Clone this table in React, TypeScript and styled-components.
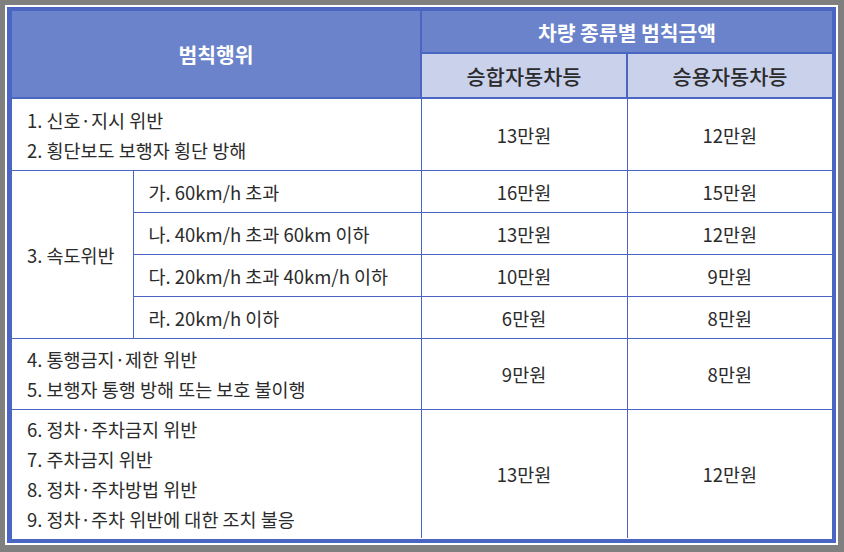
import styled, { createGlobalStyle } from "styled-components";

const GlobalStyle = createGlobalStyle`
  html, body {
    margin: 0;
    padding: 0;
    background: #7f7f7f;
  }
  body {
    font-family: "Noto Sans CJK KR", "Noto Sans", sans-serif;
    color: #2b2b2b;
  }
`;

const LINE = "#4a66c2";

const Frame = styled.div`
  box-sizing: border-box;
  width: 833px;
  height: 540px;
  margin: 5px 0 0 5px;
  padding: 2px;
  background: #fff;
`;

const Border = styled.div`
  box-sizing: border-box;
  width: 100%;
  height: 100%;
  border: 4px solid ${LINE};
  border-left-width: 5px;
  background: #fff;
`;

const Table = styled.table`
  width: 820px;
  border-collapse: collapse;
  table-layout: fixed;
`;

const HeadCell = styled.th<{ $light?: boolean; $h: number }>`
  height: ${(p) => p.$h}px;
  padding: 0;
  background: ${(p) => (p.$light ? "#c9d1eb" : "#6b83cb")};
  color: ${(p) => (p.$light ? "#2b2b2b" : "#fff")};
  font-size: ${(p) => (p.$light ? 20.8 : 20.4)}px;
  font-weight: ${(p) => (p.$light ? 500 : 700)};
  border: 2px solid ${LINE};
  border-top: none;
  text-align: center;
  vertical-align: middle;
  &:first-child {
    border-left: none;
  }
  &:last-child {
    border-right: none;
  }
`;

const Cell = styled.td<{ $h?: number; $center?: boolean }>`
  height: ${(p) => (p.$h ? `${p.$h - 1}px` : "auto")};
  padding: ${(p) => (p.$center ? "0" : "0 0 0 15px")};
  font-size: 18.5px;
  line-height: 30px;
  text-align: ${(p) => (p.$center ? "center" : "left")};
  vertical-align: middle;
  border: 1px solid ${LINE};
  border-top: none;
  &:first-child {
    border-left: none;
  }
  &:last-child {
    border-right: none;
  }
`;

const BodyRow = styled.tr<{ $last?: boolean }>`
  ${(p) => p.$last && `td { border-bottom: none; }`}
`;

const Line = styled.div``;

type Group = {
  items: string[];
  h: number;
  a: string;
  b: string;
};

const speed = [
  { label: "가. 60km/h 초과", a: "16만원", b: "15만원" },
  { label: "나. 40km/h 초과 60km 이하", a: "13만원", b: "12만원" },
  { label: "다. 20km/h 초과 40km/h 이하", a: "10만원", b: "9만원" },
  { label: "라. 20km/h 이하", a: "6만원", b: "8만원" },
];

const first: Group = {
  items: ["1. 신호·지시 위반", "2. 횡단보도 보행자 횡단 방해"],
  h: 72,
  a: "13만원",
  b: "12만원",
};

const rest: Group[] = [
  {
    items: ["4. 통행금지·제한 위반", "5. 보행자 통행 방해 또는 보호 불이행"],
    h: 71,
    a: "9만원",
    b: "8만원",
  },
  {
    items: [
      "6. 정차·주차금지 위반",
      "7. 주차금지 위반",
      "8. 정차·주차방법 위반",
      "9. 정차·주차 위반에 대한 조치 불응",
    ],
    h: 129,
    a: "13만원",
    b: "12만원",
  },
];

const GroupRow = ({ g, last }: { g: Group; last?: boolean }) => (
  <BodyRow $last={last}>
    <Cell colSpan={2} $h={g.h}>
      {g.items.map((t) => (
        <Line key={t}>{t}</Line>
      ))}
    </Cell>
    <Cell $center>{g.a}</Cell>
    <Cell $center>{g.b}</Cell>
  </BodyRow>
);

const App = () => (
  <>
    <GlobalStyle />
    <Frame>
      <Border>
        <Table>
          <colgroup>
            <col style={{ width: 121 }} />
            <col style={{ width: 288 }} />
            <col style={{ width: 206 }} />
            <col style={{ width: 205 }} />
          </colgroup>
          <thead>
            <tr>
              <HeadCell colSpan={2} rowSpan={2} $h={41}>
                범칙행위
              </HeadCell>
              <HeadCell colSpan={2} $h={41}>
                차량 종류별 범칙금액
              </HeadCell>
            </tr>
            <tr>
              <HeadCell $light $h={43}>
                승합자동차등
              </HeadCell>
              <HeadCell $light $h={43}>
                승용자동차등
              </HeadCell>
            </tr>
          </thead>
          <tbody>
            <GroupRow g={first} />
            {speed.map((s, i) => (
              <BodyRow key={s.label}>
                {i === 0 && (
                  <Cell rowSpan={4} $h={168}>
                    3. 속도위반
                  </Cell>
                )}
                <Cell $h={42}>{s.label}</Cell>
                <Cell $center>{s.a}</Cell>
                <Cell $center>{s.b}</Cell>
              </BodyRow>
            ))}
            {rest.map((g, i) => (
              <GroupRow key={i} g={g} last={i === rest.length - 1} />
            ))}
          </tbody>
        </Table>
      </Border>
    </Frame>
  </>
);

export default App;
